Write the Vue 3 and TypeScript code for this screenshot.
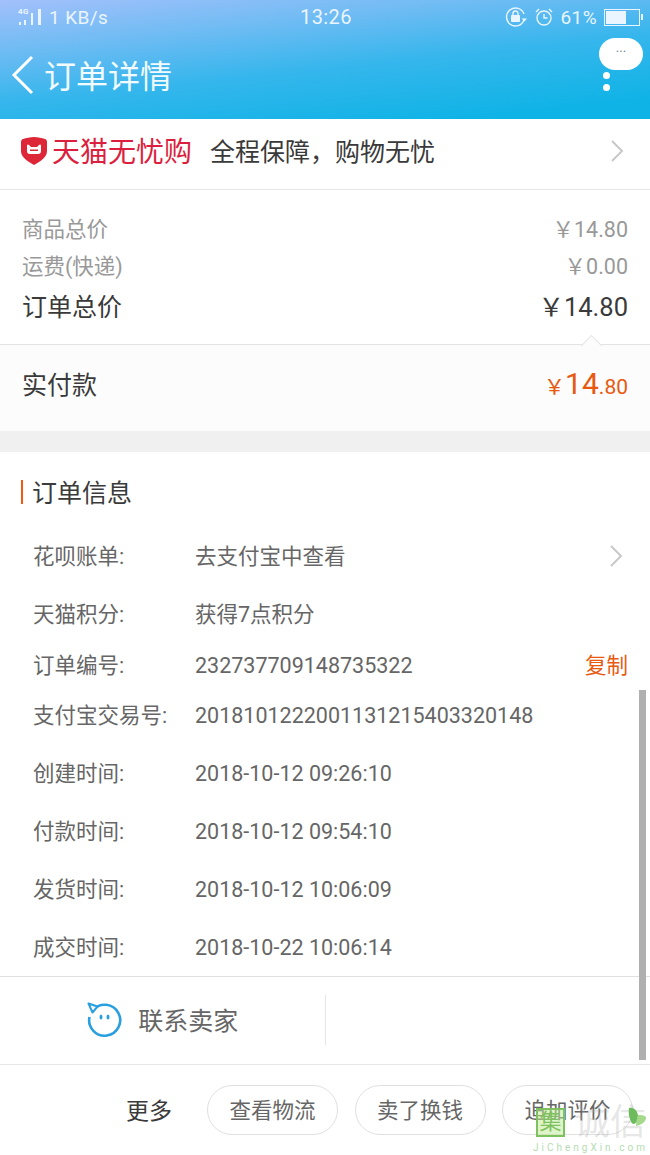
<template>
  <div class="page">
    <header class="head">
      <div class="status">
        <div class="status__left">
          <svg class="signal" width="24" height="20" viewBox="0 0 24 20">
            <text x="0" y="7" class="signal__g">4G</text>
            <rect x="1" y="15" width="2" height="3" />
            <rect x="6" y="13" width="2" height="5" />
            <rect x="13" y="6" width="2" height="12" />
            <rect x="20" y="2" width="3" height="16" />
          </svg>
          <span>1 KB/s</span>
        </div>
        <span class="status__time">13:26</span>
        <div class="status__right">
          <svg width="22" height="22" viewBox="0 0 22 22" fill="none" stroke="#eaf5ff" stroke-width="1.4">
            <path d="M19 14a9 9 0 1 1 0-6" />
            <path d="M16.500 12.500l3 3 2.500-3z" fill="#eaf5ff" stroke="none" />
            <rect x="6" y="9" width="9" height="7" rx="1" fill="#eaf5ff" stroke="none" />
            <path d="M8 9V7.500a2.500 2.500 0 0 1 5 0V9" />
          </svg>
          <svg width="20" height="20" viewBox="0 0 20 20" fill="none" stroke="#eaf5ff" stroke-width="1.4">
            <circle cx="10" cy="11" r="7" />
            <path d="M10 7v4h3.500M2 5l3-3M18 5l-3-3" />
          </svg>
          <span class="status__pct">61%</span>
          <span class="battery"><i class="battery__fill" :style="{ width: battery + '%' }" /></span>
        </div>
      </div>
      <div class="nav">
        <svg class="nav__back" width="24" height="40" viewBox="0 0 24 40" fill="none" stroke="#fff" stroke-width="3">
          <path d="M21 2L3 20l18 18" />
        </svg>
        <h1 class="nav__title">订单详情</h1>
        <div class="nav__more">
          <div class="bubble">...</div>
          <i class="dot dot--first" />
          <i class="dot" />
        </div>
      </div>
    </header>

    <section class="promo">
      <svg width="26" height="28" viewBox="0 0 26 28">
        <path d="M13 0c4 0 8 1 11 2 1 .4 2 1 2 3v9c0 6-6 10-13 14C6 24 0 20 0 14V5c0-2 1-2.600 2-3 3-1 7-2 11-2z" fill="#dd2738" />
        <path d="M6 9c0-1.500 1-2 2-1l2 2h6l2-2c1-1 2-.5 2 1v5c0 2-1 3-3 3H9c-2 0-3-1-3-3z" fill="#fff" />
        <path d="M9 12.500h8v1.500H9z" fill="#dd2738" />
      </svg>
      <span class="promo__brand">天猫无忧购</span>
      <span class="promo__text">全程保障，购物无忧</span>
      <svg class="chev" width="14" height="24" viewBox="0 0 14 24" fill="none" stroke="#c8c8c8" stroke-width="2">
        <path d="M2 2l10 10L2 22" />
      </svg>
    </section>

    <section class="prices">
      <div class="price price--sub"><span>商品总价</span><span>￥14.80</span></div>
      <div class="price price--sub"><span>运费(快递)</span><span>￥0.00</span></div>
      <div class="price price--total"><span class="price__label">订单总价</span><span>￥14.80</span></div>
    </section>

    <section class="pay">
      <i class="pay__notch" />
      <span class="pay__label">实付款</span>
      <span class="pay__amount"><small>￥</small><b>14</b><small>.80</small></span>
    </section>

    <div class="gap" />

    <section class="info">
      <h2 class="info__title">订单信息</h2>
      <div v-for="row in rows" :key="row.label" class="row" :class="row.cls">
        <span class="row__label">{{ row.label }}</span>
        <span class="row__value">{{ row.value }}</span>
        <span v-if="row.copy" class="row__copy">复制</span>
        <svg v-if="row.arrow" class="row__arrow" width="14" height="24" viewBox="0 0 14 24" fill="none" stroke="#c8c8c8" stroke-width="2">
          <path d="M2 2l10 10L2 22" />
        </svg>
      </div>
    </section>

    <section class="contact">
      <div class="contact__cell">
        <svg width="36" height="36" viewBox="0 0 36 36" fill="none" stroke="#2a9fe0" stroke-width="2.600">
          <path d="M7 8a15.500 15.500 0 1 1-3.500 7" />
          <path d="M2.500 1.500l9 3-5 6z" fill="#fff" stroke-linejoin="round" stroke-width="2" />
          <ellipse cx="15" cy="15" rx="1.500" ry="2.600" fill="#2a9fe0" stroke="none" />
          <ellipse cx="22" cy="15" rx="1.500" ry="2.600" fill="#2a9fe0" stroke="none" />
        </svg>
        <span class="contact__text">联系卖家</span>
      </div>
      <div class="contact__cell contact__cell--empty" />
    </section>

    <footer class="actions">
      <span class="actions__more">更多</span>
      <button v-for="b in buttons" :key="b" class="btn">{{ b }}</button>
    </footer>

    <i class="scrollbar" />
    <div class="mark">
      <span class="mark__box">集</span>
      <span class="mark__name">诚信</span>
      <svg class="mark__leaf" width="20" height="22" viewBox="0 0 20 22">
        <path d="M1 1c5-1 9 3 9 9 0 4-2 7-5 7-3-2-5-10-4-16z" fill="#6dbb5d" />
        <path d="M10 8c3 0 8 0 8 3 0 4-5 7-10 8 0-3 1-8 2-11z" fill="#a5da8c" />
      </svg>
      <span class="mark__url">JiChengXin.com</span>
    </div>
  </div>
</template>

<script setup lang="ts">
interface IRow {
  label: string;
  value: string;
  cls: string;
  copy?: boolean;
  arrow?: boolean;
}

const battery = 61;

const rows: IRow[] = [
  { label: "花呗账单:", value: "去支付宝中查看", cls: "row--58", arrow: true },
  { label: "天猫积分:", value: "获得7点积分", cls: "row--58" },
  { label: "订单编号:", value: "232737709148735322", cls: "row--50", copy: true },
  { label: "支付宝交易号:", value: "2018101222001131215403320148", cls: "row--50" },
  { label: "创建时间:", value: "2018-10-12 09:26:10", cls: "row--58 row--time" },
  { label: "付款时间:", value: "2018-10-12 09:54:10", cls: "row--58 row--time" },
  { label: "发货时间:", value: "2018-10-12 10:06:09", cls: "row--58 row--time" },
  { label: "成交时间:", value: "2018-10-22 10:06:14", cls: "row--58 row--time" },
];

const buttons = ["查看物流", "卖了换钱", "追加评价"];
</script>

<style>
html,
body {
  margin: 0;
  background: #fff;
}
</style>

<style scoped>
.page {
  position: relative;
  width: 650px;
  height: 1155px;
  overflow: hidden;
  background: #fff;
  font-family: Roboto, "Noto Sans CJK SC", sans-serif;
  color: #3a3a3a;
}

.head {
  height: 119px;
  background: linear-gradient(174deg, #a3c0fb 0%, #74bcf4 25%, #35b6ec 55%, #0fb3e6 90%);
  color: #eaf5ff;
}

.status {
  display: grid;
  grid-template-columns: 1fr auto 1fr;
  align-items: center;
  height: 34px;
  padding: 0 7px 0 18px;
  font-size: 19px;
  letter-spacing: 0.4px;
}

.status__left {
  display: flex;
  align-items: center;
  gap: 7px;
}

.signal {
  fill: #eaf5ff;
}

.signal__g {
  font-size: 8px;
  font-weight: 700;
}

.status__time {
  margin-right: 9px;
  font-size: 20px;
}

.status__right {
  display: flex;
  align-items: center;
  justify-content: flex-end;
  gap: 7px;
}

.battery {
  position: relative;
  display: block;
  width: 36px;
  height: 17px;
  padding: 1px;
  margin-right: 3px;
  border: 1px solid #eaf5ff;
  box-sizing: border-box;
}

.battery::after {
  content: "";
  position: absolute;
  top: 4px;
  right: -4px;
  width: 2px;
  height: 6px;
  background: #eaf5ff;
}

.battery__fill {
  display: block;
  height: 100%;
  background: #eaf5ff;
}

.nav {
  display: flex;
  align-items: center;
  height: 85px;
  padding: 0 0 0 11px;
  box-sizing: border-box;
}

.nav__back {
  margin-bottom: 4px;
}

.nav__title {
  margin: 0 0 5px 9px;
  color: #f2fbff;
  font-family: "Noto Sans CJK SC", sans-serif;
  font-size: 32px;
  font-weight: 400;
  line-height: 40px;
}

.nav__more {
  display: flex;
  flex-direction: column;
  align-items: flex-start;
  gap: 5px;
  align-self: flex-start;
  width: 44px;
  margin: 4px 7px 0 auto;
}

.bubble {
  display: flex;
  justify-content: center;
  width: 44px;
  height: 32px;
  border-radius: 16px;
  background: #fff;
  color: #6a8594;
  font-size: 13px;
  line-height: 20px;
}

.dot {
  width: 7px;
  height: 7px;
  margin-left: 4px;
  border-radius: 50%;
  background: #fff;
}

.dot--first {
  margin-top: -3px;
}

.promo {
  display: flex;
  align-items: center;
  height: 71px;
  padding: 0 26px 6px 21px;
  box-sizing: border-box;
  border-bottom: 1px solid #e6e6e6;
  font-family: "Noto Sans CJK SC", sans-serif;
}

.promo__brand {
  margin: 0 0 2px 5px;
  color: #dc1f3e;
  font-size: 28px;
  line-height: 36px;
}

.promo__text {
  margin: 0 0 2px 18px;
  font-size: 25px;
  line-height: 36px;
}

.chev {
  margin-left: auto;
}

.prices {
  display: flex;
  flex-direction: column;
  height: 155px;
  padding: 25px 22px 0;
  box-sizing: border-box;
  border-bottom: 1px solid #e3e3e3;
}

.price {
  display: flex;
  justify-content: space-between;
  align-items: baseline;
  line-height: 30px;
}

.price--sub {
  height: 37px;
  color: #999;
  font-size: 21.500px;
}

.price--total {
  height: 44px;
  padding-top: 3px;
  font-size: 25.500px;
}

.price__label {
  font-size: 25px;
}

.pay {
  position: relative;
  display: flex;
  justify-content: space-between;
  align-items: baseline;
  height: 86px;
  padding: 21px 22px 0;
  box-sizing: border-box;
  background: #fcfcfc;
}

.pay__notch {
  position: absolute;
  top: -7px;
  left: 584px;
  width: 14px;
  height: 14px;
  border-top: 1px solid #e3e3e3;
  border-left: 1px solid #e3e3e3;
  background: #fcfcfc;
  transform: rotate(45deg);
}

.pay__label {
  font-size: 25px;
  line-height: 36px;
}

.pay__amount {
  color: #e8590f;
  line-height: 36px;
}

.pay__amount b {
  font-size: 30px;
  font-weight: 400;
}

.pay__amount small {
  font-size: 21px;
}

.gap {
  height: 21px;
  background: #f0f0f0;
}

.info {
  height: 525px;
  padding-top: 28px;
  box-sizing: border-box;
  border-bottom: 1px solid #e0e0e0;
}

.info__title {
  height: 24px;
  margin: 0 0 20px 21px;
  padding-left: 9px;
  border-left: 2px solid #f0590f;
  font-family: "Noto Sans CJK SC", sans-serif;
  font-size: 25px;
  font-weight: 400;
  line-height: 22px;
}

.row {
  display: flex;
  align-items: baseline;
  padding: 0 22px 0 33px;
  color: #666;
  font-size: 21.500px;
  line-height: 30px;
}

.row--58 {
  height: 58px;
  padding-top: 18px;
  box-sizing: border-box;
}

.row--50 {
  height: 50px;
  padding-top: 11px;
  box-sizing: border-box;
}

.row--time {
  padding-top: 19px;
}

.row__label {
  flex: none;
  width: 162px;
}

.row__copy {
  margin-left: auto;
  color: #e8590f;
}

.row__arrow {
  align-self: flex-start;
  margin: 2px 5px 0 auto;
}

.contact {
  display: flex;
  align-items: center;
  height: 88px;
  padding-bottom: 2px;
  box-sizing: border-box;
  border-bottom: 1px solid #e6e6e6;
}

.contact__cell {
  display: flex;
  align-items: center;
  justify-content: center;
  gap: 16px;
  width: 325px;
  height: 50px;
  border-right: 1px solid #e6e6e6;
  color: #666;
  font-family: "Noto Sans CJK SC", sans-serif;
  font-size: 25px;
}

.contact__text {
  margin-bottom: 1px;
}

.contact__cell--empty {
  border: 0;
}

.actions {
  display: flex;
  align-items: center;
  height: 90px;
  padding-left: 126px;
  box-sizing: border-box;
}

.actions__more {
  flex: none;
  margin-right: 35px;
  margin-bottom: 2px;
  font-family: "Noto Sans CJK SC", sans-serif;
  font-size: 23px;
}

.btn {
  flex: none;
  width: 131px;
  height: 50px;
  margin-right: 16.500px;
  padding: 0 0 3px;
  border: 1px solid #e0e0e0;
  border-radius: 25px;
  background: #fff;
  color: #666;
  font-family: "Noto Sans CJK SC", sans-serif;
  font-size: 21.500px;
}

.scrollbar {
  position: absolute;
  top: 690px;
  left: 639px;
  width: 7px;
  height: 370px;
  background: #b0b0b0;
}

.mark {
  position: absolute;
  top: 1106px;
  left: 534px;
  width: 116px;
  height: 49px;
}

.mark__box {
  position: absolute;
  top: 2px;
  left: 2px;
  width: 29px;
  height: 29px;
  border: 2px solid #7fc15e;
  background: rgba(190, 235, 150, 0.5);
  box-sizing: border-box;
  color: #7fc15e;
  font-size: 22px;
  line-height: 24px;
  text-align: center;
}

.mark__name {
  position: absolute;
  top: -2px;
  left: 40px;
  color: rgba(170, 170, 170, 0.3);
  font-size: 36px;
  line-height: 38px;
  white-space: nowrap;
}

.mark__leaf {
  position: absolute;
  top: 1px;
  left: 94px;
}

.mark__url {
  position: absolute;
  top: 36px;
  left: -1px;
  color: #b5dcb0;
  font-size: 10px;
  line-height: 12px;
  letter-spacing: 3px;
  white-space: nowrap;
}
</style>
